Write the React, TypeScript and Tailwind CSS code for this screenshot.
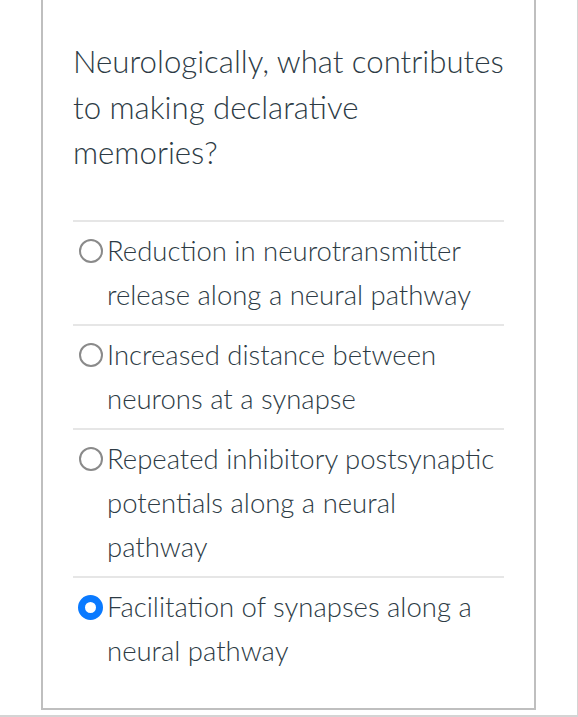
import { useState } from "react";

const options = [
  "Reduction in neurotransmitter release along a neural pathway",
  "Increased distance between neurons at a synapse",
  "Repeated inhibitory postsynaptic potentials along a neural pathway",
  "Facilitation of synapses along a neural pathway",
];

export default function App() {
  const [selected, setSelected] = useState(3);

  return (
    <div className="w-[578px] h-[717px] bg-white border-r border-b-2 border-[#d4d4d4] overflow-hidden font-['Lato',sans-serif] font-light text-[#2d3b45]">
      <div className="ml-[41px] w-[495px] h-[710px] border-x-2 border-b-2 border-[#bfbfbf] pt-[39px] px-[30px]">
        <p className="text-[31.2px] leading-[45.5px] -mr-[4px]">
          Neurologically, what contributes to making declarative memories?
        </p>

        <div className="mt-[44px]">
          {options.map((opt, i) => (
            <label
              key={i}
              className="flex items-start gap-[3px] border-t-2 border-[#e6e6e6] py-[7px] pl-[5px] pr-[8px] cursor-pointer"
              onClick={() => setSelected(i)}
            >
              <span className="mt-[10px] shrink-0 w-[25px] h-[25px] flex items-center justify-center">
                {selected === i ? (
                  <span className="w-[25px] h-[25px] rounded-full border-[7px] border-[#0a7aff] bg-white" />
                ) : (
                  <span className="w-[24px] h-[24px] rounded-full border-2 border-[#8a8a8a] bg-white" />
                )}
              </span>
              <span className="text-[27.5px] leading-[44px] pl-[1px]">{opt}</span>
            </label>
          ))}
        </div>
      </div>
    </div>
  );
}
